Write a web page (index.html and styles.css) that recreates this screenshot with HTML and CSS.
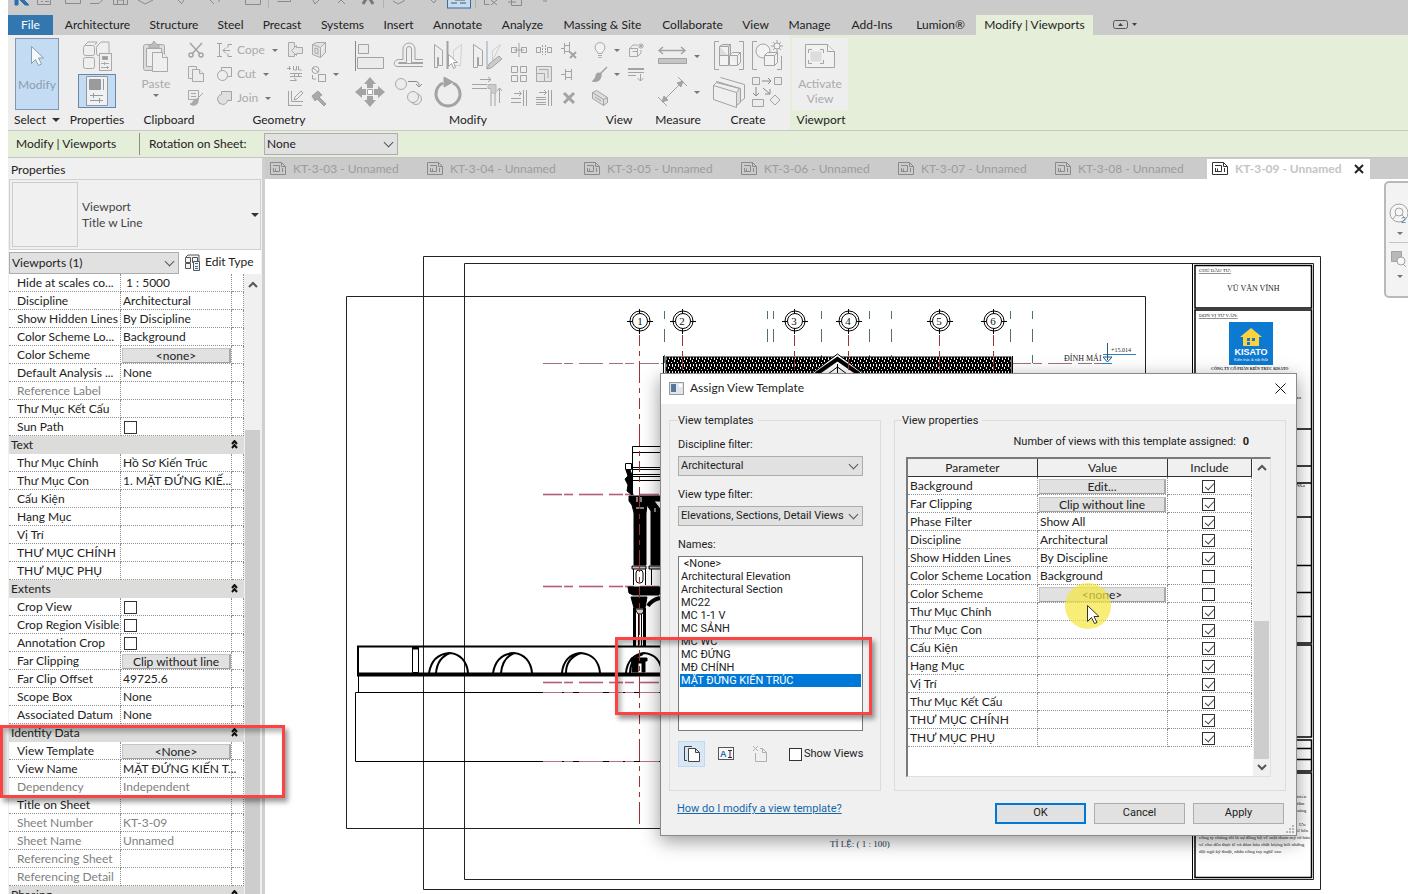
FILE: index.html
```html
<!DOCTYPE html>
<html lang="en">
<head>
    <meta charset="UTF-8">
    <meta name="viewport" content="width=device-width, initial-scale=1.0">
    <title>Assign View Template</title>
    <link rel="stylesheet" href="styles.css">
</head>
<body>
    <!-- Quick access toolbar -->
    <div class="quick-access">
        <svg width="540" height="15" viewBox="8 0 540 15" fill="none" stroke="#8a8a8a">
            <path d="M15 0v5h3V0M20 0l5 5h4l-5-5" fill="#2a6fae" stroke="#2a6fae"/>
            <path d="M37.500 0v4.500h13V0M41 1.500h2M45 1.500h4M65.500 0v3.500h15V0M90 3.500h9l4-4M113.500 0v4.500h14V0M117.500 4V0h6v4"/>
            <path d="M138 0l7 4 8-4M178 0l4 4M184 0l-2 3M210 0l4 4M219 0v2M245.500 0v4.500h15V0M277.500 1.500h13V0M313 0l2 4 4-4M338 3l3-3 4 4"/>
            <path d="M363 4l3-5M373 4l-3-5" stroke="#777" stroke-width="3"/>
            <path d="M268.500 0v8M383.500 0v8M475.500 0v8" stroke="#b2b2b2"/>
            <path d="M393 1l5 3 6-3V0M431 0l3 3 2-3M484.500 0v4.500h5M491 0l6 5M497 0l-6 5M508 2h8M511.500 0v5.500h10V0M543 1h4"/>
            <rect x="447.500" y="-8" width="23" height="16" fill="#c3dcf3" stroke="#3d6a96"/>
            <path d="M451 3h6M460 3h6M455 0h10" stroke="#555"/>
        </svg>
    </div>

    <!-- Ribbon tabs -->
    <nav class="ribbon-tabs">
        <a href="#" class="tab-file">File</a>
        <a href="#">Architecture</a>
        <a href="#">Structure</a>
        <a href="#">Steel</a>
        <a href="#">Precast</a>
        <a href="#">Systems</a>
        <a href="#">Insert</a>
        <a href="#">Annotate</a>
        <a href="#">Analyze</a>
        <a href="#">Massing &amp; Site</a>
        <a href="#">Collaborate</a>
        <a href="#">View</a>
        <a href="#">Manage</a>
        <a href="#">Add-Ins</a>
        <a href="#">Lumion®</a>
        <a href="#" class="tab-active">Modify | Viewports</a>
        <button class="tab-toggle" aria-label="Minimize ribbon">
            <svg width="26" height="10" viewBox="0 0 26 10"><rect x=".5" y=".5" width="14" height="8" rx="2" fill="none" stroke="#555"/><path d="M5 6l2.500-3L10 6zM19 3h5l-2.500 3z" fill="#444"/></svg>
        </button>
    </nav>

    <!-- Ribbon panels -->
    <div class="ribbon">
        <section class="panel">
            <div class="panel-tools">
                <button class="btn-modify">
                    <svg width="18" height="24" viewBox="0 0 18 24" fill="#f4f8fc" stroke="#8b9cab"><path d="M3.500 1.500v17l4-4 3 6 3-1.500-3-6h5z"/></svg>
                    Modify
                </button>
            </div>
            <h2>Select <i class="caret"></i></h2>
        </section>

        <section class="panel">
            <div class="panel-tools stack">
                <button class="btn-large" aria-label="Type properties">
                    <svg width="32" height="32" viewBox="0 0 32 32" fill="#efefef" stroke="#a9a9a9"><rect x="2.500" y="5.500" width="11" height="10" rx="2"/><rect x="15.500" y="5.500" width="11" height="10" rx="2"/><rect x="2.500" y="17.500" width="11" height="11" rx="2"/><path d="M4 5l3-3h9l-2 3M17 5l3-3h8v11l-2 2"/><rect x="18.500" y="13.500" width="12" height="17"/><rect x="21.500" y="16.500" width="5" height="3" fill="#999"/><path d="M20 23.500h8M20 27.500h8M23.500 22v3M26.500 26v3"/></svg>
                </button>
                <button class="btn-props" aria-label="Properties">
                    <svg width="22" height="30" viewBox="0 0 22 30" fill="#f1f1f1" stroke="#8f9aa5"><path d="M.5.500h21v29H.5z"/><path d="M3.500 3.500h11v10h-11z" fill="#9b9b9b"/><path d="M17.500 3v11M4 19.500h13M4 24.500h13M7.500 17v5M13.500 22v5"/></svg>
                </button>
            </div>
            <h2>Properties</h2>
        </section>

        <section class="panel">
            <div class="panel-tools">
                <button class="btn-paste">
                    <svg width="30" height="34" viewBox="0 0 30 34" fill="#efefef" stroke="#a9a9a9"><rect x="2.500" y="4.500" width="21" height="26" rx="2" fill="#dcdcdc"/><path d="M5.500 8.500h15v18h-15z"/><path d="M8 8V5l3-1 2-3 2 3 3 1v3z" fill="#bdbdbd"/><path d="M11.500 12.500h10l5 5v14h-15z"/><path d="M21.500 12.500v5h5"/></svg>
                    Paste
                    <i class="caret small"></i>
                </button>
                <div class="small-grid one">
                    <button aria-label="Cut to clipboard"><svg width="18" height="18" viewBox="0 0 18 18" fill="none" stroke="#a3a3a3" stroke-width="1.500"><path d="M3 2l10 11M15 2L5 13"/><circle cx="4" cy="14" r="2"/><circle cx="14" cy="14" r="2"/></svg></button>
                    <button aria-label="Copy"><svg width="18" height="18" viewBox="0 0 18 18" fill="#ececec" stroke="#a9a9a9"><path d="M1.500 1.500h8v12h-8z"/><path d="M5.500 4.500h7l4 4v8h-11z"/><path d="M12.500 4.500v4h4"/></svg></button>
                    <button aria-label="Match type"><svg width="18" height="18" viewBox="0 0 18 18" fill="#ececec" stroke="#a9a9a9"><path d="M1.500 1.500h10v9h-10z"/><path d="M4 4.500h5M4 7.500h5"/><path d="M16 4l-7 7M9 10c-3 0-2 4-6 5 4 3 9 0 8-4z" fill="#aaa"/></svg></button>
                </div>
            </div>
            <h2>Clipboard</h2>
        </section>

        <section class="panel">
            <div class="panel-tools geometry">
                <button class="wide"><svg width="18" height="18" viewBox="0 0 18 18" fill="none" stroke="#a3a3a3"><path d="M2 2.500h5M2 15.500h5M4.500 3v12M8 9.500h7M11 6.500l-3 3 3 3M17 3.500h-4v3M17 15.500h-4v-3"/></svg>Cope <i class="caret small"></i></button>
                <button><svg width="18" height="18" viewBox="0 0 18 18" fill="#e6e6e6" stroke="#a9a9a9"><path d="M2.500 1.500h6v14h-6z"/><path d="M16.500 6.500h-6v-2l-5 5 5 5v-2h6z"/></svg></button>
                <button><svg width="18" height="18" viewBox="0 0 18 18" fill="#e2e2e2" stroke="#a9a9a9"><path d="M2.500 3.500l8 3v10l-8-3zM2.500 3.500l4-2h9l-5 5M15.500 1.500v10l-5 5M5 7l3 1v5l-3-1z"/></svg></button>

                <button class="wide"><svg width="18" height="18" viewBox="0 0 18 18" fill="none" stroke="#a3a3a3"><path d="M6.500 6V2.500h10v9H13"/><circle cx="7.500" cy="10.500" r="5"/></svg>Cut <i class="caret small"></i></button>
                <button><svg width="18" height="18" viewBox="0 0 18 18" fill="none" stroke="#a3a3a3"><path d="M1 3.500h4M3.500 1v4M7.500 1v4h3V1M12.500 1v4h3M4 8.500h12M4 11.500h12M8.500 9v2M12.500 9v2M4 15.500h6M8 13l3 2.500"/></svg></button>
                <button class="with-arrow"><svg width="18" height="18" viewBox="0 0 18 18" fill="none" stroke="#a3a3a3"><circle cx="5.500" cy="5" r="3.500"/><path d="M3 3l5 4M2.500 10v4H6M8.500 9.500h7v7h-7z"/></svg><i class="caret small"></i></button>

                <button class="wide"><svg width="18" height="18" viewBox="0 0 18 18" fill="#e0e0e0" stroke="#a3a3a3"><path d="M6.500 2.500h10v9h-4a5 5 0 1 1-6-6z"/></svg>Join <i class="caret small"></i></button>
                <button><svg width="18" height="18" viewBox="0 0 18 18" fill="none" stroke="#a3a3a3"><path d="M2.500 2v14M5.500 2v10.500H17M2 16.500h14M8 11l1-3 6-6 2 2-6 6z"/></svg></button>
                <button><svg width="18" height="18" viewBox="0 0 18 18" fill="#aaa" stroke="#9f9f9f"><path d="M2 7l6-5 4 4-3 2 7 7-2 2-7-7-2 2z"/></svg></button>
            </div>
            <h2>Geometry</h2>
        </section>

        <section class="panel">
            <div class="panel-tools modify">
                <div class="large-grid four">
                    <button aria-label="Align"><svg width="32" height="32" viewBox="0 0 32 32" fill="#ebebeb" stroke="#a3a3a3"><path d="M1.500 1v30" stroke="#888"/><path d="M4.500 4.500h10v9h-10zM3.500 17.500h26v11h-26z"/></svg></button>
                    <button aria-label="Offset"><svg width="32" height="32" viewBox="0 0 32 32" fill="none" stroke="#a3a3a3"><path d="M30 26.500H4a3 3 0 0 1-2-5c1-2 3-2 5-2h3V9a6 6 0 0 1 12 0v10.500h8"/><path d="M30 23.500H6c-1 0-1-1 0-1h7.500V9a2.500 2.500 0 0 1 5 0v13.500H30"/></svg></button>
                    <button aria-label="Mirror pick axis"><svg width="32" height="32" viewBox="0 0 32 32" fill="#efefef" stroke="#a3a3a3"><path d="M2.500 4.500l8 6v15h-4v-8h-1v10h-3z"/><path d="M29.500 4.500l-8 6v15h7z" stroke="#d0d0d0"/><path d="M15.500 1v28" stroke-width="2"/><path d="M16.500 14.500v12l3-3 2 5 2-1-2-5h4z" fill="#fff"/></svg></button>
                    <button aria-label="Mirror draw axis"><svg width="32" height="32" viewBox="0 0 32 32" fill="#efefef" stroke="#a3a3a3"><path d="M2.500 4.500l9 6v15h-4v-8h-1v10h-4z"/><path d="M29.500 4.500l-8 6v10z" stroke="#d0d0d0"/><path d="M16 1v28" stroke="#bccbd8" stroke-width="2"/><path d="M16 29l2-5 10-8 3 3-11 9z" fill="#ccc"/></svg></button>
                    <button aria-label="Move"><svg width="32" height="32" viewBox="0 0 32 32" fill="#a3a3a3"><path d="M16 1l6 7h-3v4h-6V8h-3zM16 31l6-7h-3v-4h-6v4h-3zM1 16l7-6v3h4v6H8v3zM31 16l-7-6v3h-4v6h4v3z"/><path d="M13.500 13.500h5v5h-5z" fill="#fff" stroke="#a3a3a3"/></svg></button>
                    <button aria-label="Copy"><svg width="32" height="32" viewBox="0 0 32 32" fill="#ececec" stroke="#a9a9a9"><circle cx="8" cy="8" r="5.500"/><circle cx="23" cy="23" r="5.500"/><circle cx="20" cy="21" r="5.500"/><path d="M15 5.500h7c3 0 4 1 4 4M23 8l3 3 3-3" fill="none" stroke="#888"/></svg></button>
                    <button aria-label="Rotate"><svg width="32" height="32" viewBox="0 0 32 32" fill="none" stroke="#a3a3a3"><path d="M21 7a12 12 0 1 1-10 0" stroke-width="3"/><path d="M12 1l9 5-9 5z" fill="#a3a3a3"/></svg></button>
                    <button aria-label="Trim"><svg width="32" height="32" viewBox="0 0 32 32" fill="none" stroke="#a3a3a3"><path d="M1 8.500h15M1 12.500h15M20 30V17M24 30V17M9 3.500h11M17 1l3 2.500L17 6M28.500 27V12M26 15l2.500-3 2.500 3"/><path d="M17 8.500h8V17h-5v-4.500h-3z" fill="#ccc" stroke="#b5b5b5"/></svg></button>
                </div>
                <div class="small-grid three">
                    <button><svg width="18" height="18" viewBox="0 0 18 18" fill="none" stroke="#a3a3a3"><path d="M9 2v14M1.500 6.500h5v5h-5zM11.500 6.500h5v5h-5zM4 9h10"/></svg></button>
                    <button><svg width="18" height="18" viewBox="0 0 18 18" fill="none" stroke="#a3a3a3"><path d="M1.500 6.500h4v5h-4zM12.500 6.500h4v5h-4z"/><path d="M7.500 4v10M10.500 4v10" stroke-dasharray="2 1"/></svg></button>
                    <button><svg width="18" height="18" viewBox="0 0 18 18" fill="none" stroke="#a3a3a3"><path d="M1 7.500h3M4.500 2v11M5 4.500h4M5 10.500h4M9.500 1v11"/><path d="M10 11l6 6M16 11l-6 6" stroke-width="2"/></svg></button>
                    <button><svg width="18" height="18" viewBox="0 0 18 18" fill="none" stroke="#a3a3a3"><path d="M1.500 1.500h6v6h-6zM10.500 1.500h6v6h-6zM1.500 10.500h6v6h-6zM10.500 10.500h6v6h-6z"/></svg></button>
                    <button><svg width="18" height="18" viewBox="0 0 18 18" fill="#e4e4e4" stroke="#a9a9a9"><path d="M1.500 1.500h15v15h-15z"/><path d="M1.500 8.500h8v8h-8z"/><path d="M4 4.500h9V13" fill="none"/></svg></button>
                    <button><svg width="18" height="18" viewBox="0 0 18 18" fill="none" stroke="#a3a3a3"><path d="M1 9.500h4M5.500 4v11M6 6.500h5M6 12.500h5M11.500 4v11"/></svg></button>
                    <button><svg width="18" height="18" viewBox="0 0 18 18" fill="none" stroke="#a3a3a3"><path d="M4 4.500h7M9 2l2.500 2.500L9 7M1 9.500h10M1 13.500h10M13.500 1v16M16.500 1v16"/></svg></button>
                    <button><svg width="18" height="18" viewBox="0 0 18 18" fill="none" stroke="#a3a3a3"><path d="M4 3.500h7M9 1l2.500 2.500L9 6M1 8.500h10M1 10.500h10M1 13.500h10M1 15.500h10M13.500 1v16M16.500 1v16"/></svg></button>
                    <button aria-label="Delete"><svg width="18" height="18" viewBox="0 0 18 18" stroke="#a3a3a3" stroke-width="3"><path d="M4 4l10 10M14 4L4 14"/></svg></button>
                </div>
            </div>
            <h2>Modify</h2>
        </section>

        <section class="panel">
            <div class="panel-tools view">
                <button class="with-arrow"><svg width="18" height="18" viewBox="0 0 18 18" fill="#f1f1f1" stroke="#a9a9a9"><path d="M9 1.500a5 5 0 0 1 3 9l-1 2H7l-1-2a5 5 0 0 1 3-9zM7 14.500h4M7.500 16.500h3"/></svg><i class="caret small"></i></button>
                <button><svg width="18" height="18" viewBox="0 0 18 18" fill="none" stroke="#a9a9a9"><path d="M2.500 7.500h8v8h-8zM5.500 10.500h5v3M3 7l3-3h5M11 15l3-3V9M11 5h6M14 2v6M12 3l4 4M16 3l-4 4"/></svg></button>
                <button class="with-arrow"><svg width="18" height="18" viewBox="0 0 18 18" fill="#a3a3a3" stroke="#a3a3a3"><path d="M16 2l-7 7M10 9c-3-2-5 0-5 3-1 2-2 3-3 4 4 1 8-1 8-7z" stroke-width="1.500"/></svg><i class="caret small"></i></button>
                <button><svg width="18" height="18" viewBox="0 0 18 18" fill="none" stroke="#a3a3a3"><path d="M1 4h16" stroke-width="2"/><path d="M1 7.500h16M1 10.500h8M13.500 9v7M10.500 13l3 3 3-3"/></svg></button>
                <button><svg width="18" height="18" viewBox="0 0 18 18" fill="#dedede" stroke="#a3a3a3"><path d="M1.500 3.500l4-2 11 7v5l-4 3-11-7zM1.500 3.500l11 7v6M12.500 10.500l4-2M4 8l6 4"/></svg></button>
            </div>
            <h2>View</h2>
        </section>

        <section class="panel">
            <div class="panel-tools stack measure">
                <button><svg width="32" height="32" viewBox="0 0 32 32" fill="none" stroke="#a3a3a3"><path d="M3 10.500h26M7 7l-4 3.500L7 14M25 7l4 3.500-4 3.500" stroke-width="1.500"/><path d="M2.500 18.500h28v5h-28z" fill="#c5c5c5"/></svg><i class="caret small"></i></button>
                <button><svg width="32" height="32" viewBox="0 0 32 32" fill="none" stroke="#a3a3a3"><path d="M7 25L26 6M2 21l9 9M22 1l9 9"/><path d="M6 26l2-6 4 4zM27 5l-6 2 4 4z" fill="#a3a3a3"/></svg><i class="caret small"></i></button>
            </div>
            <h2>Measure</h2>
        </section>

        <section class="panel">
            <div class="panel-tools create">
                <div class="large-grid two">
                    <button><svg width="32" height="32" viewBox="0 0 32 32" fill="#f3f3f3" stroke="#a3a3a3"><path d="M6 1.500H1.500v28H6M26 1.500h4.500v28H26" fill="none"/><path d="M6.500 6.500l3-2h8v11h-11z" fill="#ddd"/><path d="M6.500 6.500h9v9M15.500 6.500l2-2"/><path d="M6.500 15.500h9v10h-9zM16.500 15.500h8v10h-8zM24.500 25.500l3-3v-10h-8l-3 3M24.500 15.500l3-3"/></svg></button>
                    <button><svg width="32" height="32" viewBox="0 0 32 32" fill="#f3f3f3" stroke="#a3a3a3"><path d="M6 1.500H1.500v28H6M30.500 16v13.500H26" fill="none"/><circle cx="12" cy="11" r="7"/><path d="M13.500 15.500l3-3h10v10l-3 3h-10zM13.500 15.500h10v10M23.500 15.500l3-3"/><path d="M26 0v12M20 6h12M22 2l8 8M30 2l-8 8"/><circle cx="26" cy="6" r="3"/></svg></button>
                    <button><svg width="34" height="32" viewBox="0 0 34 32" fill="#efefef" stroke="#a3a3a3"><path d="M8.500 1.500l24 7v14l-4 3"/><path d="M4.500 5.500l24 7v14l-4 3z" fill="#ddd"/><path d="M1.500 9.500l23 7v15l-23-8zM1.500 9.500l3-3 23 6-3 4"/></svg></button>
                    <button><svg width="32" height="32" viewBox="0 0 32 32" fill="#ececec" stroke="#a3a3a3"><path d="M1.500 1.500h7v7h-7zM23.500 1.500h7v7h-7zM1.500 23.500h11v7h-11zM24 19l5 5-5 5-5-5z"/><path d="M11 5h9M17 2l3 3-3 3M5 11v9M2 17l3 3 3-3M12 12l7 6M19 13v5h-5" stroke="#888" fill="none"/></svg></button>
                </div>
            </div>
            <h2>Create</h2>
        </section>

        <section class="panel panel-viewport">
            <div class="panel-tools">
                <button class="btn-activate">
                    <svg width="32" height="28" viewBox="0 0 32 28" fill="#f1f1f1" stroke="#a3a3a3"><path d="M1.500 2.500h22l7 7v16h-29z"/><path d="M23.500 2.500v7h7"/><path d="M6.500 9.500h11v10h-11z" fill="#dcdcdc" stroke="none"/><path d="M4.500 11V7.500H8M16 7.500h3.500V11M4.500 18v3.500H8M16 21.500h3.500V18" fill="none"/></svg>
                    Activate<br>View
                </button>
            </div>
            <h2>Viewport</h2>
        </section>
    </div>

    <!-- Options bar -->
    <div class="options-bar">
        <span class="options-title">Modify | Viewports</span>
        <label for="rotation">Rotation on Sheet:</label>
        <span class="combo"><select id="rotation"><option>None</option></select></span>
    </div>

    <div class="workspace">
        <!-- Properties palette -->
        <aside class="palette">
            <h3>Properties</h3>
            <button class="type-selector">
                <span class="thumb"></span>
                <span class="type-name">Viewport<br>Title w Line</span>
                <i class="caret"></i>
            </button>
            <div class="filter-row">
                <span class="combo"><select aria-label="Filter"><option>Viewports (1)</option></select></span>
                <button class="edit-type">
                    <svg width="17" height="17" viewBox="0 0 17 17" fill="#f4f4f4" stroke="#555"><path d="M2 3l2-2h11v8"/><path d="M1.500 3.500h5v5h-5zM8.500 3.500h5v5h-5zM1.500 9.500h5v5h-5z"/><path d="M9.500 7.500h6v9h-6z"/><path d="M11 9.500h3M11 12.500h3M11 14.500h3" stroke="#2a6fae"/></svg>
                    Edit Type
                </button>
            </div>
            <div class="grid-wrap">
                <table class="props">
                    <tr><th>Hide at scales co...</th><td>&nbsp;1 : 5000</td><td></td></tr>
                    <tr><th>Discipline</th><td>Architectural</td><td></td></tr>
                    <tr><th>Show Hidden Lines</th><td>By Discipline</td><td></td></tr>
                    <tr><th>Color Scheme Lo...</th><td>Background</td><td></td></tr>
                    <tr><th>Color Scheme</th><td><button class="cell-btn">&lt;none&gt;</button></td><td></td></tr>
                    <tr><th>Default Analysis ...</th><td>None</td><td></td></tr>
                    <tr class="off"><th>Reference Label</th><td></td><td></td></tr>
                    <tr><th>Thư Mục Kết Cấu</th><td></td><td></td></tr>
                    <tr><th><label for="sun">Sun Path</label></th><td><input type="checkbox" id="sun"></td><td></td></tr>
                    <tr class="group"><th colspan="2">Text</th><td><svg width="7" height="9" viewBox="0 0 7 9"><path d="M1 4l2.500-3L6 4M1 8l2.500-3L6 8"/></svg></td></tr>
                    <tr><th>Thư Mục Chính</th><td>Hồ Sơ Kiến Trúc</td><td></td></tr>
                    <tr><th>Thư Mục Con</th><td>1. MẶT ĐỨNG KIẾ...</td><td></td></tr>
                    <tr><th>Cấu Kiện</th><td></td><td></td></tr>
                    <tr><th>Hạng Mục</th><td></td><td></td></tr>
                    <tr><th>Vị Trí</th><td></td><td></td></tr>
                    <tr><th>THƯ MỤC CHÍNH</th><td></td><td></td></tr>
                    <tr><th>THƯ MỤC PHỤ</th><td></td><td></td></tr>
                    <tr class="group"><th colspan="2">Extents</th><td><svg width="7" height="9" viewBox="0 0 7 9"><path d="M1 4l2.500-3L6 4M1 8l2.500-3L6 8"/></svg></td></tr>
                    <tr><th><label for="crop">Crop View</label></th><td><input type="checkbox" id="crop"></td><td></td></tr>
                    <tr><th><label for="region">Crop Region Visible</label></th><td><input type="checkbox" id="region"></td><td></td></tr>
                    <tr><th><label for="anno">Annotation Crop</label></th><td><input type="checkbox" id="anno"></td><td></td></tr>
                    <tr><th>Far Clipping</th><td><button class="cell-btn">Clip without line</button></td><td></td></tr>
                    <tr><th>Far Clip Offset</th><td>49725.6</td><td></td></tr>
                    <tr><th>Scope Box</th><td>None</td><td></td></tr>
                    <tr><th>Associated Datum</th><td>None</td><td></td></tr>
                    <tr class="group"><th colspan="2">Identity Data</th><td><svg width="7" height="9" viewBox="0 0 7 9"><path d="M1 4l2.500-3L6 4M1 8l2.500-3L6 8"/></svg></td></tr>
                    <tr><th>View Template</th><td><button class="cell-btn">&lt;None&gt;</button></td><td></td></tr>
                    <tr><th>View Name</th><td>MẶT ĐỨNG KIẾN T...</td><td></td></tr>
                    <tr class="off"><th>Dependency</th><td>Independent</td><td></td></tr>
                    <tr><th>Title on Sheet</th><td></td><td></td></tr>
                    <tr class="off"><th>Sheet Number</th><td>KT-3-09</td><td></td></tr>
                    <tr class="off"><th>Sheet Name</th><td>Unnamed</td><td></td></tr>
                    <tr class="off"><th>Referencing Sheet</th><td></td><td></td></tr>
                    <tr class="off"><th>Referencing Detail</th><td></td><td></td></tr>
                    <tr class="group"><th colspan="2">Phasing</th><td><svg width="7" height="9" viewBox="0 0 7 9"><path d="M1 4l2.500-3L6 4M1 8l2.500-3L6 8"/></svg></td></tr>
                </table>
                <div class="scrollbar palette-scroll">
                    <svg width="10" height="7" viewBox="0 0 10 7"><path d="M1 6l4-4 4 4"/></svg>
                    <span class="scroll-thumb"></span>
                </div>
            </div>
        </aside>

        <main class="view-area">
            <div class="doc-tabs">
                <a href="#" class="doc-tab"><svg class="sheet" width="16" height="14" viewBox="0 0 16 14"><path d="M.5.500h11l4 4v8H.5zM11.500.500v4h4M3 3.500h6.500v6H3M3.500 6v4M5.500 6.500v3M12.500 6v4"/></svg>KT-3-03 - Unnamed</a>
                <a href="#" class="doc-tab"><svg class="sheet" width="16" height="14" viewBox="0 0 16 14"><path d="M.5.500h11l4 4v8H.5zM11.500.500v4h4M3 3.500h6.500v6H3M3.500 6v4M5.500 6.500v3M12.500 6v4"/></svg>KT-3-04 - Unnamed</a>
                <a href="#" class="doc-tab"><svg class="sheet" width="16" height="14" viewBox="0 0 16 14"><path d="M.5.500h11l4 4v8H.5zM11.500.500v4h4M3 3.500h6.500v6H3M3.500 6v4M5.500 6.500v3M12.500 6v4"/></svg>KT-3-05 - Unnamed</a>
                <a href="#" class="doc-tab"><svg class="sheet" width="16" height="14" viewBox="0 0 16 14"><path d="M.5.500h11l4 4v8H.5zM11.500.500v4h4M3 3.500h6.500v6H3M3.500 6v4M5.500 6.500v3M12.500 6v4"/></svg>KT-3-06 - Unnamed</a>
                <a href="#" class="doc-tab"><svg class="sheet" width="16" height="14" viewBox="0 0 16 14"><path d="M.5.500h11l4 4v8H.5zM11.500.500v4h4M3 3.500h6.500v6H3M3.500 6v4M5.500 6.500v3M12.500 6v4"/></svg>KT-3-07 - Unnamed</a>
                <a href="#" class="doc-tab"><svg class="sheet" width="16" height="14" viewBox="0 0 16 14"><path d="M.5.500h11l4 4v8H.5zM11.500.500v4h4M3 3.500h6.500v6H3M3.500 6v4M5.500 6.500v3M12.500 6v4"/></svg>KT-3-08 - Unnamed</a>
                <a href="#" class="doc-tab active"><svg class="sheet" width="16" height="14" viewBox="0 0 16 14"><path d="M.5.500h11l4 4v8H.5zM11.500.500v4h4M3 3.500h6.500v6H3M3.500 6v4M5.500 6.500v3M12.500 6v4"/></svg>KT-3-09 - Unnamed<svg class="close" width="10" height="10" viewBox="0 0 10 10"><path d="M1 1l8 8M9 1L1 9"/></svg></a>
            </div>

            <!-- Sheet drawing -->
            <svg class="sheet-drawing" viewBox="265 179 1143 715" preserveAspectRatio="xMinYMin slice" fill="none" stroke="#000">
                <defs>
                    <pattern id="tiles" width="6" height="7" patternUnits="userSpaceOnUse" x="665" y="356">
                        <rect width="6" height="7" fill="#000" stroke="none"/>
                        <path d="M1.500 1v3M3.500 4v2M4.500 1v2M.5 6v1" stroke="#fff"/>
                    </pattern>
                    <g id="bubble">
                        <circle r="10"/>
                        <circle r="7.500"/>
                        <path d="M-13 .5h5M8 .5h5M-.5-12v4M-.5 8v5"/>
                    </g>
                </defs>

                <path d="M423.500 256.500h897v633h-897zM464.500 263.500h849v616h-849zM346.500 296.500h799v532h-799z" stroke="#222"/>

                <!-- title block -->
                <path d="M1192.500 264v615"/>
                <path d="M1195 265.500h116.500v42.500H1195zM1195 310h116.500v119H1195zM1195 429h116.500v54H1195zM1195 483h116.500v34H1195zM1195 466h116.500M1195 565.500h116.500M1195 592.500h116.500M1195 616.500h116.500M1195 517v126h116.500V517M1195 645h116.500v92H1195zM1195 740h116.500v31H1195zM1195 748.500h116.500M1195 759.500h116.500M1195 773h116.500v104.500H1195z" stroke-width="1.500"/>
                <g class="serif" fill="#222" stroke="none">
                    <text x="1199" y="272" font-size="5" text-decoration="underline">CHỦ ĐẦU TƯ:</text>
                    <text x="1227" y="291" font-size="8">VŨ VĂN VĨNH</text>
                    <text x="1199" y="317" font-size="5" text-decoration="underline">ĐƠN VỊ TƯ VẤN:</text>
                    <text x="1211" y="370" font-size="4" font-weight="bold">CÔNG TY CỔ PHẦN KIẾN TRÚC KISATO</text>
                    <text x="1295" y="487" font-size="7">NG</text>
                    <text x="1297" y="399" font-size="5" font-weight="bold">ee</text>
                    <text x="1297" y="798" font-size="5">triển</text>
                    <text x="1297" y="805" font-size="5">tầm</text>
                    <text x="1297" y="812" font-size="5">sáng</text>
                    <text x="1299" y="826" font-size="5">Ưu</text>
                    <text x="1297" y="832" font-size="5">ở bên</text>
                    <text x="1199" y="839" font-size="5">công ty chúng tôi là sự đồng bộ về một thẩm mỹ từ bản</text>
                    <text x="1199" y="846" font-size="5">vẽ cho đến thực tế và đảm bảo chất lượng bởi những</text>
                    <text x="1199" y="853" font-size="5">đội ngũ kỹ thuật, nhân công tay nghề cao</text>
                </g>
                <rect x="1229" y="322" width="44" height="43" fill="#0c7ad1" stroke="none"/>
                <path d="M1240 337l11-9 11 9h-3v9h-16v-9z" fill="#ffd13d" stroke="none"/>
                <path d="M1247 338h3v3h-3zM1252 338h3v3h-3zM1247 342h3v3h-3z" fill="#0c7ad1" stroke="none"/>
                <text x="1251" y="355" font-size="9" font-weight="bold" text-anchor="middle" fill="#fff" stroke="none" class="sans">KISATO</text>
                <text x="1251" y="361" font-size="4" text-anchor="middle" fill="#fff" stroke="none" class="sans">Kiến trúc &amp; nội thất</text>

                <!-- level lines -->
                <path d="M543 363.500h120M1012 363.500h100" stroke="#9c7480" stroke-dasharray="19 2 9 6 24 6 14 2 9 6"/>
                <path d="M543 494.500h120M543 586.500h120M543 682.500h120" stroke="#d597ae" stroke-width="2" stroke-dasharray="19 2 9 6 24 6 14 2 9 6"/>
                <path d="M543 494.500h120M543 586.500h120M543 682.500h120" stroke="#b0607c" stroke-dasharray="19 2 9 6 24 6 14 2 9 6"/>

                <!-- grid bubbles -->
                <use href="#bubble" x="640" y="321"/>
                <use href="#bubble" x="683" y="321"/>
                <use href="#bubble" x="795" y="321"/>
                <use href="#bubble" x="849" y="321"/>
                <use href="#bubble" x="940" y="321"/>
                <use href="#bubble" x="994" y="321"/>
                <g class="serif" fill="#111" stroke="none" font-size="11" text-anchor="middle">
                    <text x="640" y="325">1</text>
                    <text x="682" y="325">2</text>
                    <text x="794" y="325">3</text>
                    <text x="848" y="325">4</text>
                    <text x="939" y="325">5</text>
                    <text x="993" y="325">6</text>
                </g>
                <path d="M664.500 311v62M767.500 311v40M773.500 311v40M821.500 311v50M869.500 311v50M891.500 311v50M1010.500 311v40M1032.500 311v56" stroke="#4d7078" stroke-dasharray="8 10 13 13"/>

                <!-- roof -->
                <rect x="666" y="357" width="345" height="17" fill="url(#tiles)" stroke="#000"/>
                <path d="M663.500 356v18M1012.500 356v18"/>
                <path d="M811 374l26.500-20 26.500 20z" fill="#fff"/>
                <path d="M816 374l21.500-15 21.500 15" stroke-width="4"/>
                <path d="M828 374l9.500-7 9.500 7zM837.500 364v10"/>
                <path d="M682.500 335v38M794.500 335v38M848.500 335v38M939.500 335v38M993.500 335v38" stroke="#a03035" stroke-dasharray="11 5 5 3"/>

                <!-- elevation mark -->
                <path d="M1103 354.500h33M1102 363.500h10" stroke="#2f83bd"/>
                <path d="M1107.500 343v17M1103 357h9l-4.500 5z" stroke="#245a84"/>
                <g class="serif" fill="#222" stroke="none">
                    <text x="1064" y="361" font-size="8">ĐỈNH MÁI</text>
                    <text x="1111" y="352" font-size="6">+15.014</text>
                    <text x="830" y="847" font-size="9" fill="#1c3557">TỈ LỆ: ( 1 : 100)</text>
                </g>

                <!-- building front, left part -->
                <path d="M661 446.500h-28.500v48M633 452.500h28M633 467.500h28M633 469.500h28M629 474.500h32M629 476.500h32M632 480.500h29"/>
                <path d="M625.500 463.500h6v6h-6z"/>
                <path d="M626 470h4l2 5v20l-5-4 1-6-3-6 3-3z" fill="#000"/>
                <path d="M629 496h32v5h-7l6 8v56h-9v-54l-4-6-1 8v52h-12v-52l-2-8-3-4z" fill="#000"/>
                <path d="M637 497v5M641 497v5M636 508h8M655 508v4" stroke="#fff"/>
                <path d="M632 566h14v3h-14zM649 566h12v3h-12z" fill="#bbb"/>
                <path d="M633.500 569v16M645.500 569v16M651.500 569v16"/>
                <rect x="636" y="570" width="7" height="13" rx="3"/>
                <path d="M628 587h33v4h-1l-1 4h-26l-4-2z" fill="#000"/>
                <path d="M631 597h16l-2 11h-11z" fill="#000"/>
                <path d="M648 606c3-5 7-7 12-8" stroke-width="4"/>
                <path d="M635 609h10l-3 5h-4z" fill="#ccc"/>
                <path d="M634.500 608v38M644.500 608v38" stroke-width="3"/>
                <path d="M638.500 614v32M641.500 614v32"/>

                <!-- fence wall -->
                <path d="M661 646.500H358v29" stroke-width="2"/>
                <path d="M357 674.500h304" stroke-width="4"/>
                <path d="M412.500 648.500h6v24h-6zM358.500 676v16M661 692.500H355.500v69H661"/>
                <path d="M412 648h7" stroke-width="3"/>
                <g stroke-width="2">
                    <path d="M429 673c2-12 9-19 20-20M436 673c1-11 6-17 14-20c10 1 17 8 18 20"/>
                    <path d="M493 673c2-12 9-19 20-20M501 673c1-11 6-17 13-20c10 1 17 8 18 20"/>
                    <path d="M562 673c1-12 8-19 18-20M566 673c0-11 6-17 15-20c11 1 18 8 19 20"/>
                    <path d="M626 673c1-12 8-19 18-20c11 1 17 8 18 20M630 673c0-11 5-16 13-19"/>
                </g>
                <path d="M631 658h16v3h-2v11h-3v-9h-4v9h-6v-8z" fill="#000"/>
                <path d="M543 692.500h118M543 761.500h118" stroke="#b77088" stroke-dasharray="19 2 9 6 24 6 14 2 9 6"/>
                <path d="M639.500 335v489" stroke="#a03035" stroke-dasharray="11 5 5 5 22 5 5 5"/>
            </svg>

            <!-- Navigation bar -->
            <div class="nav-bar">
                <svg width="20" height="22" viewBox="0 0 20 22" fill="#f6f6f6" stroke="#a3a3a3"><circle cx="10" cy="10" r="9"/><circle cx="10" cy="9" r="4"/><path d="M4 16l3-4M13 12l3 3"/><text x="12" y="20" font-size="9" fill="#5c7f9c" stroke="none" class="sans">2</text></svg>
                <i class="caret small"></i>
                <hr>
                <svg width="18" height="18" viewBox="0 0 18 18" fill="#b8b8b8" stroke="#a3a3a3"><path d="M2.500 1.500h10v10h-10z"/><circle cx="12" cy="11" r="4" fill="#f6f6f6"/><path d="M14 14l3 3"/></svg>
                <i class="caret small"></i>
            </div>
        </main>
    </div>

    <!-- Assign View Template dialog -->
    <div class="dialog" role="dialog" aria-labelledby="dialogTitle">
        <div class="dialog-title">
            <svg width="15" height="13" viewBox="0 0 15 13"><rect x=".5" y=".5" width="14" height="12" fill="#e2e6ea" stroke="#9a9a9a"/><path d="M2 2h5v8H2z" fill="#56779c"/><path d="M10 2h3v3h-3z" fill="#fff"/></svg>
            <h1 id="dialogTitle">Assign View Template</h1>
            <button class="dialog-close" aria-label="Close"><svg width="11" height="11" viewBox="0 0 11 11" stroke="#111"><path d="M.5.500l10 10M10.500.500l-10 10"/></svg></button>
        </div>
        <div class="dialog-body">
            <fieldset class="templates">
                <legend>View templates</legend>
                <label for="discipline">Discipline filter:</label>
                <span class="combo"><select id="discipline"><option>Architectural</option></select></span>
                <label for="viewType">View type filter:</label>
                <span class="combo"><select id="viewType"><option>Elevations, Sections, Detail Views</option></select></span>
                <label for="names">Names:</label>
                <select id="names" class="names" size="13">
                    <option>&nbsp;&lt;None&gt;</option>
                    <option>Architectural Elevation</option>
                    <option>Architectural Section</option>
                    <option>MC22</option>
                    <option>MC 1-1 V</option>
                    <option>MC SẢNH</option>
                    <option>MC WC</option>
                    <option>MC ĐỨNG</option>
                    <option>MĐ CHÍNH</option>
                    <option selected>MẶT ĐỨNG KIẾN TRÚC</option>
                </select>
                <div class="template-tools">
                    <button class="tool active" aria-label="Duplicate"><svg width="18" height="18" viewBox="0 0 18 18" fill="#fff" stroke="#444"><path d="M9 1.500H1.500v14H4" fill="none"/><path d="M5.500 3.500h7l4 4v9h-11zM12.500 3.500v4h4"/></svg></button>
                    <button class="tool" aria-label="Rename"><svg width="16" height="14" viewBox="0 0 16 14"><rect x=".5" y=".5" width="15" height="12" fill="#f7f7f7" stroke="#555"/><text x="2" y="10" font-size="9" font-weight="bold" fill="#1c6fb5" class="sans">A</text><path d="M10 3.500h4M10 10.500h4M12 3.500v7" stroke="#333"/></svg></button>
                    <button class="tool" aria-label="Delete"><svg width="16" height="18" viewBox="0 0 16 18" fill="none" stroke="#b0b0b0"><path d="M1 1l5 5M6 1L1 6M3.500 8v8.500h11v-9l-4-4H8M10.500 3.500v4h4"/></svg></button>
                    <label class="show-views"><input type="checkbox"> Show Views</label>
                </div>
            </fieldset>

            <fieldset class="view-props">
                <legend>View properties</legend>
                <p class="count">Number of views with this template assigned: <b>0</b></p>
                <div class="param-wrap">
                    <table class="params">
                        <thead>
                            <tr><th>Parameter</th><th>Value</th><th>Include</th></tr>
                        </thead>
                        <tbody>
                            <tr><td>Background</td><td><button class="cell-btn">Edit...</button></td><td><input type="checkbox" aria-label="Include Background" checked></td></tr>
                            <tr><td>Far Clipping</td><td><button class="cell-btn">Clip without line</button></td><td><input type="checkbox" aria-label="Include Far Clipping" checked></td></tr>
                            <tr><td>Phase Filter</td><td>Show All</td><td><input type="checkbox" aria-label="Include Phase Filter" checked></td></tr>
                            <tr><td>Discipline</td><td>Architectural</td><td><input type="checkbox" aria-label="Include Discipline" checked></td></tr>
                            <tr><td>Show Hidden Lines</td><td>By Discipline</td><td><input type="checkbox" aria-label="Include Show Hidden Lines" checked></td></tr>
                            <tr><td>Color Scheme Location</td><td>Background</td><td><input type="checkbox" aria-label="Include Color Scheme Location"></td></tr>
                            <tr><td>Color Scheme</td><td><button class="cell-btn">&lt;none&gt;</button></td><td><input type="checkbox" aria-label="Include Color Scheme"></td></tr>
                            <tr><td>Thư Mục Chính</td><td></td><td><input type="checkbox" aria-label="Include Thư Mục Chính" checked></td></tr>
                            <tr><td>Thư Mục Con</td><td></td><td><input type="checkbox" aria-label="Include Thư Mục Con" checked></td></tr>
                            <tr><td>Cấu Kiện</td><td></td><td><input type="checkbox" aria-label="Include Cấu Kiện" checked></td></tr>
                            <tr><td>Hạng Mục</td><td></td><td><input type="checkbox" aria-label="Include Hạng Mục" checked></td></tr>
                            <tr><td>Vị Trí</td><td></td><td><input type="checkbox" aria-label="Include Vị Trí" checked></td></tr>
                            <tr><td>Thư Mục Kết Cấu</td><td></td><td><input type="checkbox" aria-label="Include Thư Mục Kết Cấu" checked></td></tr>
                            <tr><td>THƯ MỤC CHÍNH</td><td></td><td><input type="checkbox" aria-label="Include THƯ MỤC CHÍNH" checked></td></tr>
                            <tr><td>THƯ MỤC PHỤ</td><td></td><td><input type="checkbox" aria-label="Include THƯ MỤC PHỤ" checked></td></tr>
                        </tbody>
                    </table>
                    <div class="scrollbar param-scroll">
                        <svg width="10" height="7" viewBox="0 0 10 7"><path d="M1 6l4-4 4 4"/></svg>
                        <span class="scroll-thumb"></span>
                        <svg width="10" height="7" viewBox="0 0 10 7"><path d="M1 1l4 4 4-4"/></svg>
                    </div>
                </div>
            </fieldset>
        </div>
        <div class="dialog-footer">
            <a href="#">How do I modify a view template?</a>
            <button class="push default">OK</button>
            <button class="push">Cancel</button>
            <button class="push">Apply</button>
        </div>
        <svg class="grip" width="9" height="9" viewBox="0 0 9 9" fill="#b5b5b5"><path d="M6 0h2v2H6zM3 3h2v2H3zM6 3h2v2H6zM0 6h2v2H0zM3 6h2v2H3zM6 6h2v2H6z"/></svg>
    </div>

    <!-- Pointer and callouts -->
    <div class="pointer">
        <svg width="46" height="46" viewBox="0 0 46 46"><circle cx="23" cy="23" r="23" fill="#f5e63c" fill-opacity=".7"/><path d="M22.500 22.500v16l4-4 3 6 2.500-1-3-6h5z" fill="#fff" stroke="#333"/></svg>
    </div>
    <div class="callout callout-identity"></div>
    <div class="callout callout-template"></div>
</body>
</html>
```
FILE: styles.css
```css
* {
    box-sizing: border-box;
}

body {
    margin: 0;
    padding-left: 8px;
    height: 100vh;
    display: flex;
    flex-direction: column;
    overflow: hidden;
    position: relative;
    background: #fff;
    color: #222;
    font-family: Lato, "Open Sans", sans-serif;
    font-size: 12px;
    line-height: 16px;
}

button, select, input {
    font: inherit;
    color: inherit;
    margin: 0;
}

button {
    background: none;
    border: 0;
    padding: 0;
}

svg {
    display: block;
    flex: none;
}

h1, h2, h3, p {
    margin: 0;
    font-size: 12px;
    font-weight: normal;
}

.serif {
    font-family: "Liberation Serif", serif;
}

.sans {
    font-family: "Liberation Sans", sans-serif;
}

.caret {
    display: inline-block;
    border: 4px solid transparent;
    border-top-color: #333;
    border-bottom: 0;
}

.caret.small {
    border-width: 3px;
    border-bottom: 0;
    border-top-color: #777;
}

/* Title strip and tabs */
.quick-access {
    height: 15px;
    flex: none;
    background: #cbcbcb;
}

.ribbon-tabs {
    display: grid;
    grid-template-columns: 45px 89px 64px 49px 54px 67px 45px 73px 57px 103px 77px 49px 59px 66px 71px 117px 66px;
    height: 20px;
    flex: none;
    background: #cbcbcb;
}

.ribbon-tabs a {
    color: #222;
    text-decoration: none;
    text-align: center;
    line-height: 20px;
    white-space: nowrap;
}

.ribbon-tabs .tab-file {
    background: #3277b0;
    color: #fff;
}

.ribbon-tabs .tab-active {
    background: #e5eed9;
}

.tab-toggle {
    display: grid;
    place-items: center;
}

/* Ribbon */
.ribbon {
    display: grid;
    grid-template-columns: 58px 62px 82px 138px 240px 62px 56px 84px 60px;
    height: 96px;
    flex: none;
    background: #e5eed9;
    border-bottom: 1px solid #c6cac2;
}

.panel {
    display: flex;
    flex-direction: column;
    background: #eee;
    padding-top: 3px;
}

.panel h2 {
    height: 20px;
    line-height: 19px;
    text-align: center;
}

.panel h2 .caret {
    margin-left: 3px;
    vertical-align: 2px;
}

.panel-tools {
    flex: 1;
    display: flex;
    color: #aaa;
}

.panel-tools button {
    display: flex;
    align-items: center;
    justify-content: center;
}

.panel-tools.stack {
    flex-direction: column;
    align-items: center;
}

.panel-tools .btn-modify {
    width: 44px;
    height: 72px;
    margin-left: 7px;
    padding-bottom: 10px;
    flex-direction: column;
    gap: 8px;
    background: #c3dcf3;
    border: 1px solid #7f98b0;
    color: #8b9cab;
}

.btn-large {
    width: 36px;
    height: 36px;
}

.panel-tools .btn-props {
    width: 38px;
    height: 34px;
    background: #c3dcf3;
    border: 1px solid #6b86a0;
}

.panel-tools .btn-paste {
    width: 56px;
    height: 60px;
    flex-direction: column;
    gap: 2px;
}

.small-grid {
    display: grid;
    grid-auto-rows: 24px;
}

.small-grid.one {
    grid-template-columns: 24px;
}

.small-grid.three {
    grid-template-columns: repeat(3, 25px);
}

.large-grid {
    display: grid;
    grid-auto-rows: 36px;
}

.large-grid.four {
    grid-template-columns: repeat(4, 39px);
}

.large-grid.two {
    grid-template-columns: 38px 38px;
}

.panel-tools.geometry {
    display: grid;
    grid-template-columns: 68px 24px 34px;
    grid-auto-rows: 24px;
    padding-left: 5px;
    align-content: start;
}

.panel-tools.geometry .wide {
    justify-content: flex-start;
    gap: 4px;
}

.geometry .wide .caret {
    margin-left: 3px;
}

.panel-tools.modify {
    padding-left: 2px;
}

.panel-tools.view {
    display: grid;
    grid-template-columns: 36px 24px;
    grid-auto-rows: 24px;
    align-content: start;
}

.panel-tools.view > button,
.panel-tools.geometry > button:not(.wide) {
    justify-content: flex-start;
    padding-left: 3px;
}

.with-arrow {
    gap: 5px;
}

.measure button {
    height: 36px;
    gap: 6px;
}

.panel-tools.create {
    padding-left: 4px;
}

.panel-viewport {
    background: none;
    padding-left: 2px;
}

.panel-tools .btn-activate {
    width: 56px;
    height: 72px;
    flex-direction: column;
    background: #eee;
    line-height: 15px;
}

.btn-activate svg {
    margin-bottom: 6px;
}

/* Options bar */
.options-bar {
    display: flex;
    align-items: center;
    height: 27px;
    flex: none;
    padding-left: 8px;
    background: #e5eed9;
    border-bottom: 1px solid #c4c4c4;
}

.options-title {
    width: 124px;
    height: 22px;
    line-height: 22px;
    border-right: 1px solid #8a8f84;
}

.options-bar label {
    width: 124px;
    padding-left: 9px;
}

.options-bar .combo {
    width: 134px;
    height: 22px;
}

.combo {
    display: block;
    position: relative;
}

.combo select {
    display: block;
    width: 100%;
    height: 100%;
    padding: 0 2px;
    appearance: none;
    background: #e1e1e1;
    border: 1px solid #adadad;
    border-radius: 0;
}

.combo::after {
    content: "";
    position: absolute;
    right: 6px;
    top: calc(50% - 5px);
    width: 6px;
    height: 6px;
    border: solid #555;
    border-width: 0 1px 1px 0;
    transform: rotate(45deg);
}

/* Properties palette */
.workspace {
    flex: 1;
    display: flex;
    min-height: 0;
}

.palette {
    width: 257px;
    flex: none;
    display: flex;
    flex-direction: column;
    background: #f0f0f0;
    border-right: 3px solid #cfcfcf;
    padding: 0 1px;
    overflow: hidden;
}

.palette h3 {
    height: 21px;
    flex: none;
    line-height: 24px;
    padding-left: 2px;
}

.type-selector {
    display: flex;
    align-items: center;
    height: 71px;
    flex: none;
    padding: 2px;
    border: 1px solid #d0d0d0;
    text-align: left;
    color: #444;
}

.thumb {
    width: 66px;
    height: 65px;
    border: 1px solid #ccc;
}

.type-name {
    flex: 1;
    padding-left: 4px;
}

.type-selector .caret {
    margin-right: -1px;
}

.filter-row {
    display: flex;
    height: 24px;
    flex: none;
    padding-top: 2px;
    background: #fff;
}

.filter-row .combo {
    width: 170px;
    height: 22px;
}

.edit-type {
    display: flex;
    align-items: center;
    gap: 4px;
    height: 20px;
    padding-left: 5px;
}

.grid-wrap {
    flex: 1;
    display: flex;
    min-height: 0;
}

.props {
    width: 235px;
    table-layout: fixed;
    border-spacing: 0;
    background: #fff;
    align-self: flex-start;
    flex: none;
}

.props th,
.props td {
    height: 18px;
    padding: 0 0 0 2px;
    line-height: 15px;
    font-weight: normal;
    text-align: left;
    white-space: nowrap;
    border-right: 1px dotted #8f8f8f;
    border-bottom: 1px dotted #8f8f8f;
}

.props th {
    width: 112px;
    padding-left: 8px;
}

.props td:last-child {
    width: 12px;
}

.props .off {
    color: #808080;
}

.props .group th,
.props .group td {
    background: #dcdcdb;
    border-color: transparent;
    padding-left: 2px;
}

.group path {
    fill: none;
    stroke: #111;
    stroke-width: 2;
}

.group svg {
    margin-left: -3px;
}

.cell-btn {
    display: block;
    width: calc(100% - 1px);
    height: 15px;
    margin-top: 1px;
    line-height: 14px;
    text-align: center;
    background: #e1e1e1;
    border: 1px solid #c4c4c4;
    border-right: 2px solid #a9a9a9;
    border-bottom-color: #a0a0a0;
}

.props .cell-btn {
    width: 109px;
    margin-left: -1px;
}

input[type="checkbox"] {
    appearance: none;
    display: block;
    position: relative;
    width: 13px;
    height: 13px;
    flex: none;
    background: #fff;
    border: 1px solid #333;
}

input[type="checkbox"]:checked::after {
    content: "";
    position: absolute;
    left: 4px;
    top: 0;
    width: 4px;
    height: 8px;
    border: solid #444;
    border-width: 0 1px 1px 0;
    transform: rotate(42deg);
}

.props input {
    margin: 2px 0 0 1px;
}

.scrollbar {
    display: flex;
    flex-direction: column;
    align-items: center;
    width: 17px;
    background: #f0f0f0;
}

.scrollbar path {
    fill: none;
    stroke: #555;
    stroke-width: 2;
}

.scroll-thumb {
    width: 15px;
    flex: 1;
    background: #cdcdcd;
}

.palette-scroll {
    padding-top: 7px;
}

.palette-scroll .scroll-thumb {
    margin-top: 142px;
}

/* Drawing area */
.view-area {
    flex: 1;
    min-width: 0;
    display: flex;
    flex-direction: column;
    position: relative;
}

.doc-tabs {
    display: flex;
    height: 21px;
    flex: none;
    padding-top: 1px;
    background: #cbcbcb;
}

.doc-tab {
    display: flex;
    align-items: center;
    gap: 7px;
    width: 157px;
    padding-left: 5px;
    font-size: 12px;
    color: #9c9c9c;
    text-decoration: none;
    white-space: nowrap;
}

.doc-tab.active {
    width: 163px;
    background: #fff;
    color: #c4c4c4;
    font-weight: bold;
}

.sheet path {
    fill: none;
    stroke: #8a8a8a;
}

.active .sheet path {
    stroke: #333;
}

.close {
    margin-left: 6px;
}

.close path {
    stroke: #222;
    stroke-width: 2;
}

.sheet-drawing {
    width: 100%;
    flex: 1;
    min-height: 0;
}

.nav-bar {
    position: absolute;
    right: -6px;
    top: 23px;
    width: 30px;
    height: 117px;
    padding: 20px 0 0 3px;
    display: flex;
    flex-direction: column;
    align-items: flex-start;
    gap: 7px;
    background: #f3f3f3;
    border: 2px solid #b9b9b9;
    border-radius: 5px;
}

.nav-bar .caret {
    margin-left: 8px;
}

.nav-bar hr {
    width: 100%;
    margin: 0;
    border: 0;
    border-top: 1px solid #c4c4c4;
}

/* Dialog */
.dialog {
    position: absolute;
    left: 660px;
    top: 373px;
    width: 637px;
    background: #f0f0f0;
    border: 1px solid #8a8a8a;
    box-shadow: 0 5px 18px rgba(0, 0, 0, 0.4);
    font-family: Roboto, "Open Sans", sans-serif;
    font-size: 11px;
    line-height: 14px;
}

.dialog-title {
    display: flex;
    align-items: center;
    gap: 6px;
    height: 30px;
    padding: 0 10px 2px 8px;
    background: #fff;
}

.dialog-title h1 {
    flex: 1;
    font-family: Lato, "Open Sans", sans-serif;
}

.dialog-body {
    display: flex;
    gap: 13px;
    padding: 9px 10px 0 8px;
}

fieldset {
    margin: 0;
    padding: 11px 9px 0 8px;
    min-width: 0;
    height: 378px;
    border: 1px solid #dcdcdc;
}

legend {
    height: 14px;
    padding: 0 4px 0 0;
    line-height: 16px;
}

.templates {
    width: 212px;
}

.templates > label {
    display: block;
    margin-bottom: 4px;
}

.templates .combo {
    width: 185px;
    height: 20px;
    margin-bottom: 12px;
}

.names {
    display: block;
    width: 185px;
    height: 175px;
    padding: 0 1px;
    overflow: hidden;
    background: #fff;
    border: 1px solid #7a7a7a;
    border-radius: 0;
}

.names option {
    height: 13px;
    min-height: 13px;
    padding: 0 1px;
    line-height: 13px;
}

.names option:checked {
    background: linear-gradient(#0078d7, #0078d7);
    -webkit-text-fill-color: #fff;
}

.template-tools {
    display: flex;
    align-items: center;
    gap: 7px;
    margin-top: 10px;
}

.tool {
    display: grid;
    place-items: center;
    width: 27px;
    height: 26px;
}

.tool.active {
    background: #d9e6f4;
    border: 1px solid #c0d8f0;
}

.show-views {
    display: flex;
    align-items: center;
    gap: 2px;
    margin-left: 9px;
    white-space: nowrap;
}

.view-props {
    flex: 1;
    padding: 8px 14px 0 11px;
}

.view-props legend {
    margin-left: -4px;
}

.count {
    font-size: 11px;
    text-align: right;
    padding-right: 22px;
    margin-bottom: 8px;
}

.count b {
    margin-left: 4px;
}

.param-wrap {
    display: flex;
    height: 320px;
    background: #fff;
    border: 1px solid #e0e0e0;
    border-top: 2px solid #7a7a7a;
    border-left: 2px solid #7a7a7a;
}

.params {
    width: 343px;
    table-layout: fixed;
    border-spacing: 0;
    align-self: flex-start;
    flex: none;
    font-family: Lato, "Open Sans", sans-serif;
    font-size: 12px;
}

.params th {
    width: 130px;
    height: 18px;
    padding: 0;
    font-weight: normal;
    background: #f0f0f0;
    border-right: 1px solid #333;
    border-bottom: 1px solid #333;
}

.params th:last-child {
    width: 84px;
}

.params td {
    height: 18px;
    padding: 0 0 0 2px;
    line-height: 15px;
    white-space: nowrap;
    border-right: 1px dotted #8f8f8f;
    border-bottom: 1px dotted #8f8f8f;
}

.params .cell-btn {
    width: 127px;
    margin-left: -1px;
}

.params td:last-child {
    padding: 0 2px 0 0;
}

.params input {
    margin: 1px auto 0;
}

.param-scroll {
    margin-left: 1px;
    padding: 5px 0;
}

.param-scroll .scroll-thumb {
    margin: 150px 0 5px;
}

.dialog-footer {
    display: flex;
    align-items: center;
    gap: 8px;
    height: 44px;
    padding: 0 12px 0 16px;
}

.dialog-footer a {
    margin-right: auto;
    margin-bottom: 8px;
    color: #1467a8;
}

.push {
    width: 91px;
    height: 21px;
    background: #e1e1e1;
    border: 1px solid #adadad;
}

.push.default {
    border: 2px solid #0078d7;
}

.grip {
    position: absolute;
    right: 1px;
    bottom: 1px;
}

/* Pointer highlight and red callouts */
.pointer {
    position: absolute;
    left: 1065px;
    top: 583px;
}

.callout {
    position: absolute;
    border: 3px solid #fb4343;
    box-shadow: 3px 4px 5px rgba(0, 0, 0, 0.4), inset 3px 4px 5px rgba(0, 0, 0, 0.3);
}

.callout-identity {
    left: 0;
    top: 725px;
    width: 285px;
    height: 73px;
}

.callout-template {
    left: 615px;
    top: 637px;
    width: 257px;
    height: 78px;
}
```
